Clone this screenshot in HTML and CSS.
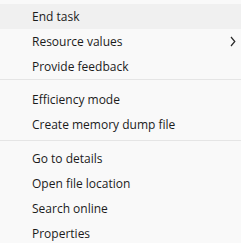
FILE: index.html
```html
<!DOCTYPE html>
<html lang="en">
<head>
  <meta charset="UTF-8" />
  <title>Context menu</title>
  <link rel="stylesheet" href="styles.css">
</head>
<body>
  <div class="menu">
    <div class="group">
      <div class="item active">End task</div>
      <div class="item">Resource values
        <svg class="chevron" width="6" height="11" viewBox="0 0 6 11"><path d="M1 1 L4.8 5.5 L1 10" fill="none" stroke="#2b2b2b" stroke-width="1.2"/></svg>
      </div>
      <div class="item">Provide feedback</div>
    </div>
    <div class="sep first"></div>
    <div class="group">
      <div class="item">Efficiency mode</div>
      <div class="item">Create memory dump file</div>
    </div>
    <div class="sep"></div>
    <div class="group">
      <div class="item">Go to details</div>
      <div class="item">Open file location</div>
      <div class="item">Search online</div>
      <div class="item">Properties</div>
    </div>
  </div>
</body>
</html>
```

FILE: styles.css
```css
body {
  margin: 0;
  background: #f9f9f9;
  font-family: "Open Sans", "Noto Sans", sans-serif;
  color: #1b1b1b;
}

.menu {
  padding-top: 4px;
}

.sep {
  height: 1px;
  background: #e5e5e5;
  margin: 3px 0 5px;
}

.sep.first {
  margin: 0 0 7px;
}

.item {
  height: 25px;
  display: flex;
  align-items: center;
  padding-left: 32px;
  padding-right: 5px;
  font-size: 12px;
}

.item.active {
  background: #f0f0f0;
}

.chevron {
  margin-left: auto;
}
```
